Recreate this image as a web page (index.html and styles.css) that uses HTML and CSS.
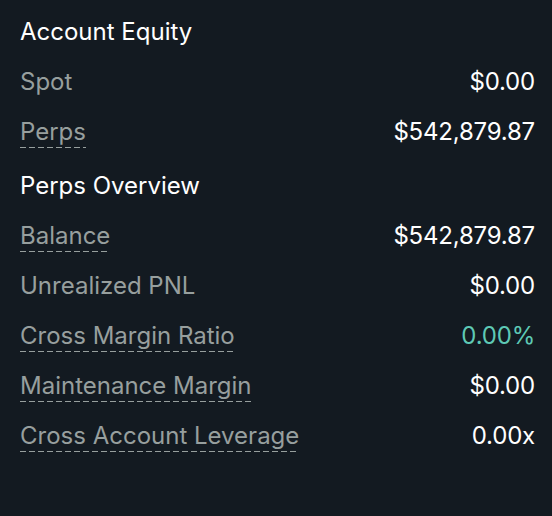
FILE: index.html
```html
<!DOCTYPE html>
<html>
<head>
<meta charset="utf-8">
<link rel="stylesheet" href="styles.css">
</head>
<body>
<div class="panel">
  <div class="title">Account Equity</div>
  <div class="row"><span class="label">Spot</span><span class="value">$0.00</span></div>
  <div class="row"><span class="label dashed">Perps</span><span class="value">$542,879.87</span></div>
  <div class="title section">Perps Overview</div>
  <div class="row"><span class="label dashed">Balance</span><span class="value">$542,879.87</span></div>
  <div class="row"><span class="label">Unrealized PNL</span><span class="value">$0.00</span></div>
  <div class="row"><span class="label dashed">Cross Margin Ratio</span><span class="value green">0.00%</span></div>
  <div class="row"><span class="label dashed">Maintenance Margin</span><span class="value">$0.00</span></div>
  <div class="row"><span class="label dashed">Cross Account Leverage</span><span class="value">0.00x</span></div>
</div>
</body>
</html>
```
FILE: styles.css
```css
html, body {
  margin: 0;
  padding: 0;
  background: #131a21;
}
body {
  width: 552px;
  height: 516px;
  font-family: Inter, "Noto Sans", sans-serif;
  font-size: 24px;
  color: #ffffff;
}
.panel {
  padding: 7px 17px 0 20px;
  display: flex;
  flex-direction: column;
}
.title {
  height: 50px;
  box-sizing: border-box;
  padding-bottom: 2px;
  display: flex;
  align-items: center;
  color: #ffffff;
}
.title.section {
  margin-top: 4px;
}
.row {
  height: 50px;
  display: flex;
  align-items: center;
  justify-content: space-between;
}
.label {
  color: #979f9e;
  line-height: 28px;
}
.value {
  line-height: 28px;
}
.dashed {
  padding-bottom: 2px;
  margin-bottom: -2px;
  background-image: linear-gradient(to right, #979f9e 6px, transparent 6px);
  background-size: 9px 1.5px;
  background-repeat: repeat-x;
  background-position: 0 100%;
}
.value {
  color: #ffffff;
  letter-spacing: -0.2px;
}
.value.green {
  color: #5ec9b5;
}
```
